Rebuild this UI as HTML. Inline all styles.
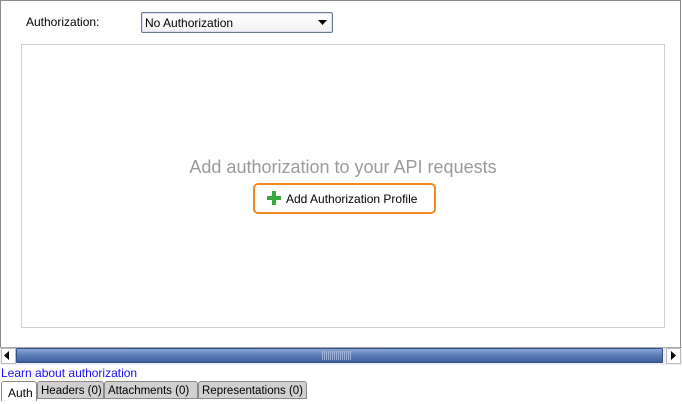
<!DOCTYPE html>
<html><head><style>
body{margin:0;width:682px;height:402px;background:#fff;font-family:"Liberation Sans",Tahoma,sans-serif;font-size:12px;position:relative;overflow:hidden}
.abs{position:absolute;white-space:nowrap}
.tab{background:#d0d0d0;border:1px solid #888;border-radius:3px 3px 0 0;box-sizing:border-box;line-height:18px;padding-left:3px;font-size:11.5px;top:381px;height:18px}
</style></head><body>
<div class="abs" style="left:0;top:0;width:679px;height:346px;border:1px solid #8a8a8a;border-bottom:none;"></div>
<div class="abs" style="left:26px;top:15px;color:#000">Authorization:</div>
<div class="abs" style="left:141px;top:12px;width:190px;height:19px;border:1px solid #6a7a90;border-radius:2px;background:linear-gradient(#fff,#f2f2f2);box-shadow:inset 0 0 0 1px #dde;">
 <span class="abs" style="left:3px;top:3px">No Authorization</span>
 <svg class="abs" style="right:5px;top:7px" width="9" height="5"><path d="M0 0H9L4.5 5Z" fill="#000"/></svg>
</div>
<div class="abs" style="left:21px;top:44px;width:642px;height:282px;border:1px solid #cfcfcf;"></div>
<div class="abs" style="left:21px;top:157px;width:644px;text-align:center;color:#9a9a9a;font-size:18px">Add authorization to your API requests</div>
<div class="abs" style="left:253px;top:183px;width:179px;height:27px;border:2px solid #f08a1e;border-radius:5px;background:#fff;">
 <svg class="abs" style="left:12px;top:6px" width="14" height="14"><path d="M5 0h4v5h5v4H9v5H5V9H0V5h5z" fill="#3aa840"/></svg>
 <span class="abs" style="left:31px;top:7px;color:#000">Add Authorization Profile</span>
</div>
<div class="abs" style="left:0;top:347px;width:682px;height:17px;background:#f0f0f0;border-top:1px solid #aaa"></div>
<div class="abs" style="left:1px;top:348px;width:13px;height:14px;background:#fff;border:1px solid #bbb"></div>
<svg class="abs" style="left:4px;top:351px" width="5" height="9"><path d="M5 0V9L0 4.5Z" fill="#000"/></svg>
<div class="abs" style="left:16px;top:348px;width:647px;height:15px;background:linear-gradient(#8aa6d4,#5b7bb8 50%,#3f5f9f);border:1px solid #2f4f8f;box-sizing:border-box;border-radius:1px"></div>
<div class="abs" style="left:322px;top:351px;width:30px;height:9px;background:repeating-linear-gradient(90deg,#b8c8e8 0 1px,transparent 1px 2px);opacity:.7"></div>
<div class="abs" style="left:666px;top:348px;width:13px;height:14px;background:#fff;border:1px solid #bbb"></div>
<svg class="abs" style="left:671px;top:351px" width="5" height="9"><path d="M0 0V9L5 4.5Z" fill="#000"/></svg>
<div class="abs" style="left:1px;top:366px;color:#1a0dff">Learn about authorization</div>
<div class="abs" style="left:1px;top:381px;width:36px;height:20px;background:#fff;border:1px solid #888;border-bottom:none;border-radius:3px 3px 0 0;padding-left:6px;line-height:22px;box-sizing:border-box">Auth</div>
<div class="abs tab" style="left:37px;width:67px">Headers (0)</div>
<div class="abs tab" style="left:104px;width:94px">Attachments (0)</div>
<div class="abs tab" style="left:198px;width:109px">Representations (0)</div>
</body></html>
